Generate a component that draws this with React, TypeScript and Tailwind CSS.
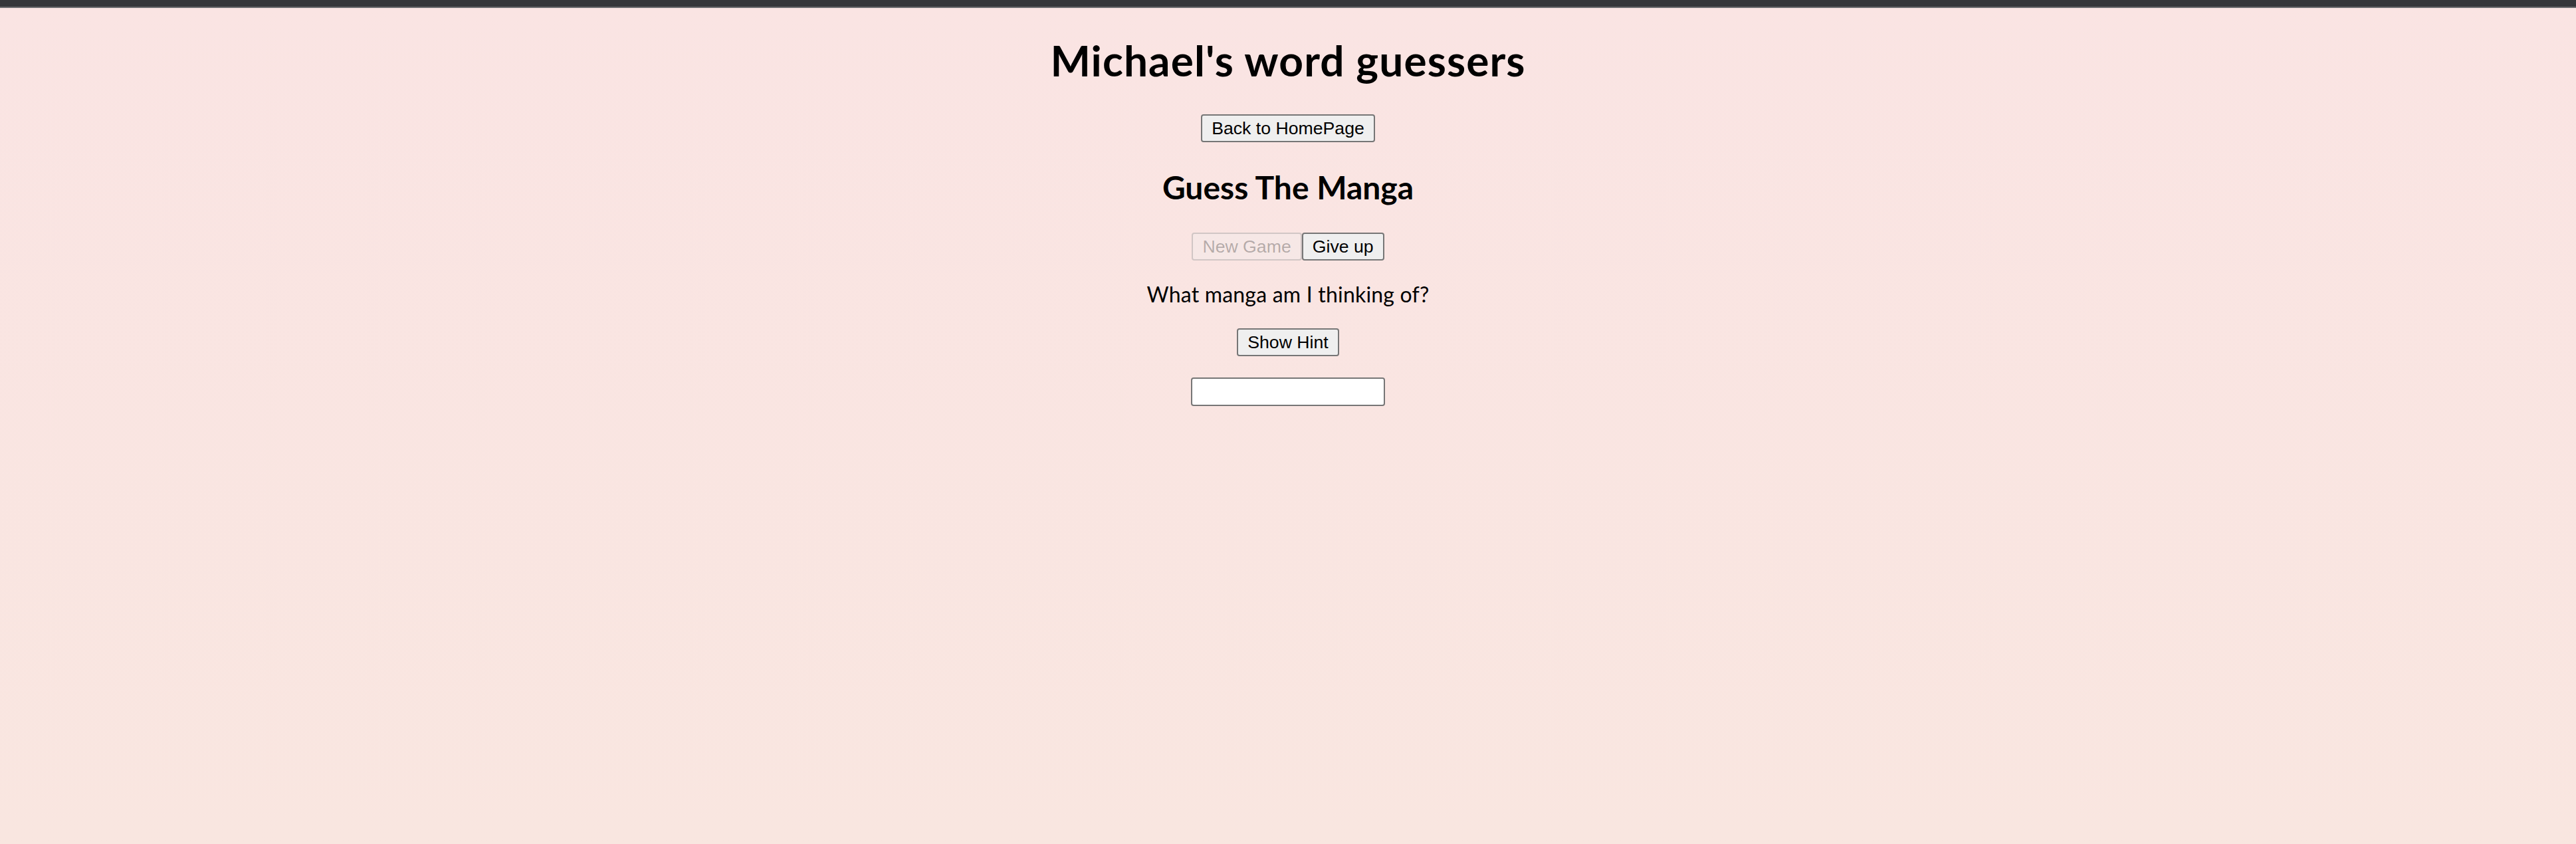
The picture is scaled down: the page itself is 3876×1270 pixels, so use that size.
import React from "react";

const btn =
  "h-[42px] px-[14px] border-2 border-[#767676] rounded-[4px] bg-[#efefef] text-[26.67px] leading-[30px] text-black";

export default function App() {
  return (
    <div className="w-full h-[1270px] flex flex-col bg-linear-to-b from-[#fae4e3] to-[#f9e6e0] font-['Lato',sans-serif]">
      <div className="h-[10px] bg-[#36373b]" />
      <div className="h-[2px] bg-[#6c6c6f]" />
      <div className="flex flex-col items-center">
        <h1 className="mt-[47px] text-[64px] leading-none font-bold tracking-[1.1px] text-black">
          Michael's word guessers
        </h1>
        <button className={`${btn} mt-[49px] font-['Liberation_Sans',Arial,sans-serif]`}>
          Back to HomePage
        </button>
        <h2 className="mt-[44px] text-[48px] leading-none font-bold text-black">
          Guess The Manga
        </h2>
        <div className="mt-[44px] flex flex-row">
          <button
            disabled
            className="h-[42px] px-[14px] border-2 border-[#7676764d] rounded-[4px] bg-[#efefef4d] text-[26.67px] leading-[30px] text-[#1010104d] font-['Liberation_Sans',Arial,sans-serif]"
          >
            New Game
          </button>
          <button className={`${btn} font-['Liberation_Sans',Arial,sans-serif]`}>
            Give up
          </button>
        </div>
        <p className="mt-[35px] text-[32px] leading-none tracking-[0.2px] text-black">
          What manga am I thinking of?
        </p>
        <button className={`${btn} mt-[35px] font-['Liberation_Sans',Arial,sans-serif]`}>
          Show Hint
        </button>
        <input
          type="text"
          className="mt-[32px] w-[292px] h-[43px] border-2 border-[#767676] rounded-[4px] bg-white px-[4px] text-[26.67px] font-['Liberation_Sans',Arial,sans-serif] outline-none"
        />
      </div>
    </div>
  );
}
